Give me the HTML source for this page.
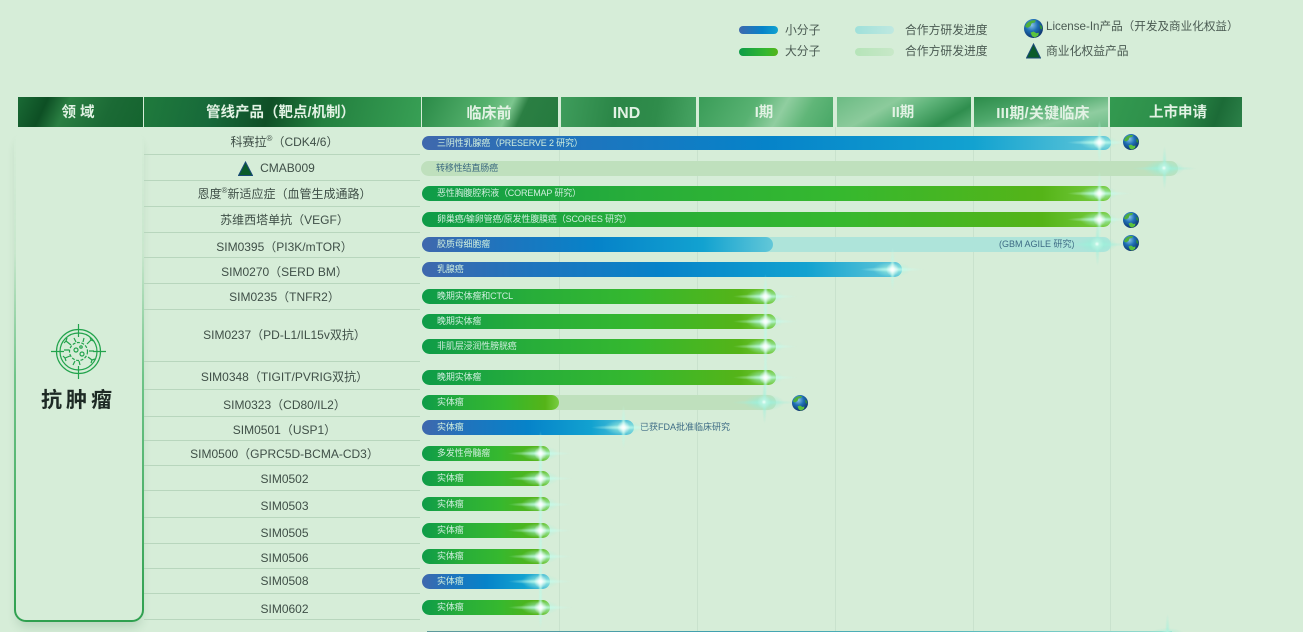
<!DOCTYPE html>
<html lang="zh">
<head>
<meta charset="utf-8">
<title>管线</title>
<style>
html,body{margin:0;padding:0;background:#d6edd8;width:1303px;height:632px;overflow:hidden;}
body{font-family:"Liberation Sans","Noto Sans CJK SC",sans-serif;color:#3b4a42;}
#w{position:relative;width:1303px;height:632px;overflow:hidden;filter:blur(.35px);}
.a{position:absolute;}
.h{position:absolute;top:97px;height:30px;line-height:33px;text-align:center;font-size:14.500px;font-weight:700;color:#e2f2e4;white-space:nowrap;}
.r{position:absolute;left:146px;width:277px;margin-top:-.5px;text-align:center;font-size:12px;line-height:16px;height:16px;color:#3f4f47;white-space:nowrap;}
.l{position:absolute;left:144px;width:276px;height:1px;background:#b8d6bd;}
.v{position:absolute;top:127px;height:505px;width:1px;background:#c9e2cd;}
.b{position:absolute;left:422px;height:14.500px;border-radius:8px;font-size:9px;letter-spacing:-.15px;line-height:14.500px;color:#cfeedd;padding-left:15px;box-sizing:border-box;white-space:nowrap;overflow:hidden;}
.blue{background:linear-gradient(90deg,#3f68ad 0,#1f74bd 22%,#0683c9 50%,#12a2d0 80%,#62c7d8 100%);}
.green{background:linear-gradient(90deg,#0e9c48 0,#27ad3a 30%,#35b82f 60%,#55b418 90%,#79cd42 100%);}
.pale{background:#bfe0bd;color:#3c6a80;}
.teal{background:#aee4da;}
.s{position:absolute;width:64px;height:44px;margin:-22px 0 0 -32px;background:
radial-gradient(closest-side,#fff 0,rgba(255,255,255,.85) 22%,rgba(220,255,245,0) 100%) center/13px 13px no-repeat,
radial-gradient(closest-side,rgba(200,255,240,.8),rgba(150,240,215,0)) center/64px 5px no-repeat,
radial-gradient(closest-side,rgba(190,250,232,.9),rgba(150,240,215,0)) center/5px 44px no-repeat,
radial-gradient(closest-side,rgba(170,245,225,.85),rgba(150,240,215,0)) center/38px 15px no-repeat;}
.d{background:
radial-gradient(closest-side,rgba(240,255,250,1) 0,rgba(190,245,228,.8) 35%,rgba(160,240,220,0) 100%) center/14px 14px no-repeat,
radial-gradient(closest-side,rgba(160,240,220,.8),rgba(150,240,215,0)) center/64px 5px no-repeat,
radial-gradient(closest-side,rgba(160,240,220,.85),rgba(150,240,215,0)) center/5px 44px no-repeat,
radial-gradient(closest-side,rgba(150,238,215,.95),rgba(150,240,215,0)) center/40px 17px no-repeat;}
.g{position:absolute;}
.t{position:absolute;font-size:11.800px;line-height:16px;color:#4a5a52;white-space:nowrap;}
.lb{position:absolute;height:8px;width:39px;border-radius:4px;}
</style>
</head>
<body>
<div id="w">
<svg width="0" height="0" style="position:absolute">
<defs>
<radialGradient id="gl" cx="40%" cy="32%" r="72%">
<stop offset="0" stop-color="#8ac4e8"/><stop offset=".45" stop-color="#1f6fb5"/><stop offset="1" stop-color="#0c2f66"/>
</radialGradient>
<symbol id="globe" viewBox="0 0 16 16">
<circle cx="8" cy="8" r="8" fill="url(#gl)"/>
<path d="M3 3.200C5 1.200 8 .8 10 1.200L9 3 6.500 3.500 5.500 6 3 7.500 1 6.500C1.200 5.200 2 4 3 3.200Z" fill="#4fae3c"/>
<path d="M5.500 11.500 8 10.500 10.500 12 12.500 11.500 12 14 9 15.600 6.800 14.500Z" fill="#5cc23e"/>
<path d="M13 4.500 15 6 15.400 9 13.600 8Z" fill="#2f8f3a"/>
</symbol>
</defs>
</svg>

<!-- legend -->
<div class="lb" style="left:739px;top:26px;background:linear-gradient(90deg,#3f68ad,#0683c9 60%,#12a2d0)"></div>
<div class="t" style="left:785px;top:22px">小分子</div>
<div class="lb" style="left:739px;top:48px;background:linear-gradient(90deg,#0e9c48,#35b82f 70%,#55b418)"></div>
<div class="t" style="left:785px;top:43px">大分子</div>
<div class="lb" style="left:855px;top:26px;background:linear-gradient(90deg,#9fe0da,#bfe8e0)"></div>
<div class="t" style="left:905px;top:22px">合作方研发进度</div>
<div class="lb" style="left:855px;top:48px;background:linear-gradient(90deg,#b5e4b8,#c8e8c8)"></div>
<div class="t" style="left:905px;top:43px">合作方研发进度</div>
<svg class="g" style="left:1024px;top:19px" width="19" height="19"><use href="#globe"/></svg>
<div class="t" style="left:1046px;top:19px;font-size:11.600px">License-In产品（开发及商业化权益）</div>
<svg class="g" style="left:1026px;top:43px" width="15" height="16" viewBox="0 0 15 16"><path d="M7.500 1 14.500 15H.5Z" fill="#0b5b2a" stroke="#1a4a78" stroke-width="1"/></svg>
<div class="t" style="left:1046px;top:43px">商业化权益产品</div>

<!-- header -->
<div class="h" style="left:18px;width:125px;padding-right:5px;box-sizing:border-box;background:linear-gradient(115deg,#1a6a35 0,#0d4f24 22%,#2a7f42 38%,#1b6a35 70%,#15642f 100%)">领 域</div>
<div class="h" style="left:144px;width:277px;padding-right:4px;box-sizing:border-box;background:linear-gradient(105deg,#1f7a3c 0,#17693a 25%,#0f4f26 45%,#23803f 65%,#38a055 100%)">管线产品（靶点/机制）</div>
<div class="h" style="left:422px;width:136px;font-size:15px;padding-right:2px;box-sizing:border-box;background:linear-gradient(115deg,#2a8a47 0,#56b26e 45%,#7cc68e 62%,#2b7f43 72%,#257a3f 100%)">临床前</div>
<div class="h" style="left:561px;width:135px;font-size:16px;padding-right:4px;box-sizing:border-box;background:linear-gradient(100deg,#3f9d5c 0,#2b8647 40%,#2f8c4b 70%,#47a463 100%)">IND</div>
<div class="h" style="left:699px;width:134px;padding-right:4px;box-sizing:border-box;background:linear-gradient(120deg,#3a9c58 0,#58b272 40%,#90cea0 60%,#60b678 78%,#48a766 100%)">I期</div>
<div class="h" style="left:837px;width:134px;padding-right:2px;box-sizing:border-box;background:linear-gradient(150deg,#6cbb84 0,#8ccb9c 35%,#5fb47a 55%,#2f8e4e 80%,#58ad73 100%)">II期</div>
<div class="h" style="left:974px;width:134px;font-size:15px;padding-left:4px;box-sizing:border-box;letter-spacing:.2px;background:linear-gradient(165deg,#2c8c4a 0,#4fa96c 40%,#8fcda0 72%,#6fbc88 100%)">III期/关键临床</div>
<div class="h" style="left:1110px;width:132px;padding-left:4px;box-sizing:border-box;background:linear-gradient(110deg,#339a50 0,#2c8c49 50%,#1c6b37 80%,#2c8149 100%)">上市申请</div>

<!-- grid lines -->
<div class="v" style="left:559px"></div>
<div class="v" style="left:697px"></div>
<div class="v" style="left:835px"></div>
<div class="v" style="left:973px"></div>
<div class="v" style="left:1110px"></div>

<!-- left card -->
<div class="a" style="left:14px;top:130px;width:130px;height:492px;border-radius:12px;background:linear-gradient(180deg,rgba(47,160,80,0) 0,rgba(47,160,80,.08) 25%,#6fc488 50%,#2fa04f 100%);box-shadow:0 8px 10px -3px rgba(30,90,50,.16)">
<div class="a" style="left:2px;top:0;width:126px;height:490px;border-radius:10px;background:#d6edd8"></div>
</div>
<svg class="g" style="left:50px;top:322.500px" width="58" height="58" viewBox="0 0 58 58" fill="none" stroke="#22a34c" stroke-width="1.200">
<circle cx="28.500" cy="28.500" r="22"/>
<circle cx="28.500" cy="28.500" r="18.500"/>
<circle cx="28.500" cy="28.500" r="9" stroke-dasharray="3 1.500"/>
<path d="M28.500 1V14M28.500 43V56M1 28.500H14M43 28.500H56"/>
<path d="M21 22 16 18M16 18 14 20M16 18 17 15M37 21 41 17M41 17 44 18M41 17 40 14M20 33 15 35M15 35 13 33M15 35 16 38M38 34 42 37M42 37 45 36M42 37 41 40M29 38 30 42M25 38 23 42M33 19 34 15M26 19 24 15M19 27 14 27M39 28 44 28"/>
<circle cx="26" cy="27" r="2"/><circle cx="32" cy="31" r="2"/><circle cx="31" cy="24" r="1.200"/>
</svg>
<div class="a" style="left:41px;top:388px;font-size:21px;line-height:26px;font-weight:700;letter-spacing:4px;color:#1e2a25;white-space:nowrap">抗肿瘤</div>

<!-- separators -->
<div class="l" style="top:154px"></div>
<div class="l" style="top:180px"></div>
<div class="l" style="top:206px"></div>
<div class="l" style="top:232px"></div>
<div class="l" style="top:257px"></div>
<div class="l" style="top:283px"></div>
<div class="l" style="top:309px"></div>
<div class="l" style="top:361px"></div>
<div class="l" style="top:389px"></div>
<div class="l" style="top:416px"></div>
<div class="l" style="top:440px"></div>
<div class="l" style="top:465px"></div>
<div class="l" style="top:490px"></div>
<div class="l" style="top:517px"></div>
<div class="l" style="top:543px"></div>
<div class="l" style="top:568px"></div>
<div class="l" style="top:593px"></div>
<div class="l" style="top:619px"></div>

<!-- rows -->
<div class="r" style="top:134px">科赛拉<sup style="font-size:8px;line-height:0">®</sup>（CDK4/6）</div>
<div class="r" style="top:160px;text-indent:6px">CMAB009</div>
<svg class="g" style="left:238px;top:161px" width="15" height="15" viewBox="0 0 15 15"><path d="M7.500 1 14.500 14.500H.5Z" fill="#0b5b2a" stroke="#1a4a78" stroke-width="1"/></svg>
<div class="r" style="top:186px">恩度<sup style="font-size:8px;line-height:0">®</sup>新适应症（血管生成通路）</div>
<div class="r" style="top:212px">苏维西塔单抗（VEGF）</div>
<div class="r" style="top:239px">SIM0395（PI3K/mTOR）</div>
<div class="r" style="top:264px">SIM0270（SERD BM）</div>
<div class="r" style="top:289px">SIM0235（TNFR2）</div>
<div class="r" style="top:327px">SIM0237（PD-L1/IL15v双抗）</div>
<div class="r" style="top:369px">SIM0348（TIGIT/PVRIG双抗）</div>
<div class="r" style="top:397px">SIM0323（CD80/IL2）</div>
<div class="r" style="top:422px">SIM0501（USP1）</div>
<div class="r" style="top:446px">SIM0500（GPRC5D-BCMA-CD3）</div>
<div class="r" style="top:471px">SIM0502</div>
<div class="r" style="top:498px">SIM0503</div>
<div class="r" style="top:525px">SIM0505</div>
<div class="r" style="top:550px">SIM0506</div>
<div class="r" style="top:573px">SIM0508</div>
<div class="r" style="top:601px">SIM0602</div>

<!-- bars -->
<div class="b blue" style="top:135.500px;width:689px">三阴性乳腺癌（PRESERVE 2 研究）</div>
<div class="b pale" style="top:161px;left:421px;width:757px">转移性结直肠癌</div>
<div class="b green" style="top:186px;width:689px">恶性胸腹腔积液（COREMAP 研究）</div>
<div class="b green" style="top:212px;width:689px">卵巢癌/输卵管癌/原发性腹膜癌（SCORES 研究）</div>
<div class="b teal" style="top:237px;width:689px"></div>
<div class="b blue" style="top:237px;width:351px">胶质母细胞瘤</div>
<div class="a" style="left:999px;top:237px;font-size:9px;line-height:15px;color:#3d6b85;white-space:nowrap">(GBM AGILE 研究)</div>
<div class="b blue" style="top:262px;width:480px">乳腺癌</div>
<div class="b green" style="top:289px;width:354px">晚期实体瘤和CTCL</div>
<div class="b green" style="top:314px;width:354px">晚期实体瘤</div>
<div class="b green" style="top:339px;width:354px">非肌层浸润性膀胱癌</div>
<div class="b green" style="top:370px;width:354px">晚期实体瘤</div>
<div class="b pale" style="top:395px;width:354px"></div>
<div class="b green" style="top:395px;width:137px">实体瘤</div>
<div class="b blue" style="top:420px;width:212px">实体瘤</div>
<div class="a" style="left:640px;top:420px;font-size:9px;line-height:14px;color:#3d6b85;white-space:nowrap">已获FDA批准临床研究</div>
<div class="b green" style="top:446px;width:128px">多发性骨髓瘤</div>
<div class="b green" style="top:471px;width:128px">实体瘤</div>
<div class="b green" style="top:496.500px;width:128px">实体瘤</div>
<div class="b green" style="top:523px;width:128px">实体瘤</div>
<div class="b green" style="top:549px;width:128px">实体瘤</div>
<div class="b blue" style="top:574px;width:128px">实体瘤</div>
<div class="b green" style="top:600px;width:128px">实体瘤</div>
<div class="a" style="top:631px;left:427px;width:745px;height:1px;background:linear-gradient(90deg,#5f9a9c,#3fa0b0 40%,#55b8bc 70%,#9adfd0)"></div>

<!-- stars -->
<div class="s" style="left:1099px;top:142px"></div>
<div class="s d" style="left:1164px;top:168px"></div>
<div class="s" style="left:1099px;top:193px"></div>
<div class="s" style="left:1099px;top:219px"></div>
<div class="s d" style="left:1097px;top:244px"></div>
<div class="s" style="left:892px;top:269px"></div>
<div class="s" style="left:765px;top:296px"></div>
<div class="s" style="left:765px;top:321px"></div>
<div class="s" style="left:765px;top:346px"></div>
<div class="s" style="left:765px;top:377px"></div>
<div class="s d" style="left:764px;top:402px"></div>
<div class="s" style="left:623px;top:427px"></div>
<div class="s" style="left:540px;top:453px"></div>
<div class="s" style="left:540px;top:478px"></div>
<div class="s" style="left:540px;top:504px"></div>
<div class="s" style="left:540px;top:530px"></div>
<div class="s" style="left:540px;top:556px"></div>
<div class="s" style="left:540px;top:581px"></div>
<div class="s" style="left:540px;top:607px"></div>
<div class="s d" style="left:1167px;top:636px"></div>

<!-- globes -->
<svg class="g" style="left:1123px;top:134px" width="16" height="16"><use href="#globe"/></svg>
<svg class="g" style="left:1123px;top:212px" width="16" height="16"><use href="#globe"/></svg>
<svg class="g" style="left:1123px;top:235px" width="16" height="16"><use href="#globe"/></svg>
<svg class="g" style="left:792px;top:395px" width="16" height="16"><use href="#globe"/></svg>
</div>
</body>
</html>
